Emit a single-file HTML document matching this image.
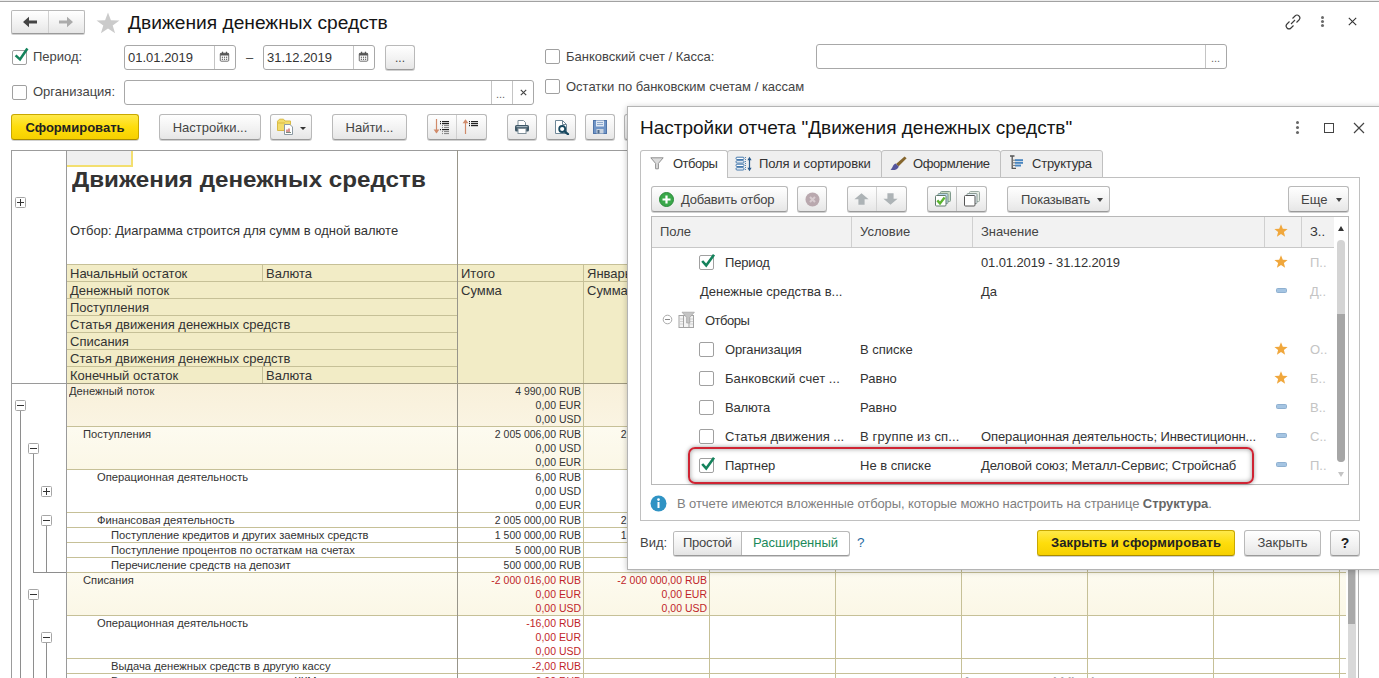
<!DOCTYPE html>
<html lang="ru">
<head>
<meta charset="utf-8">
<title>Движения денежных средств</title>
<style>
*{box-sizing:border-box;margin:0;padding:0}
html,body{width:1379px;height:678px;overflow:hidden;background:#fff}
body{font-family:"Liberation Sans",sans-serif;font-size:13px;color:#444;position:relative}
.abs{position:absolute}
.t{position:absolute;white-space:nowrap;line-height:1}
.btn{position:absolute;border:1px solid #b9b9b9;border-bottom-color:#9a9a9a;border-radius:3px;background:linear-gradient(#ffffff,#f1f1f1 60%,#e6e6e6);box-shadow:0 1px 0 rgba(0,0,0,.18);color:#444;text-align:center;white-space:nowrap}
.btn.y{background:linear-gradient(#ffe94a,#fedd0c 50%,#f6d000);border-color:#c9a800;border-bottom-color:#a98c00;color:#222;font-weight:bold}
.inp{position:absolute;border:1px solid #a8a8a8;border-radius:3px;background:#fff}
.cb{position:absolute;width:15px;height:15px;border:1px solid #a0a0a0;border-radius:2px;background:#fff}
.vl{position:absolute;width:1px;background:#c4c4c4}
.hl{position:absolute;height:1px}
/* report */
#rep{position:absolute;left:0;top:0;width:1379px;height:678px;overflow:hidden}
.rl{position:absolute;background:#c9c89a}
.rt{position:absolute;white-space:nowrap;font-size:13px;color:#333;line-height:17px}
.rd{position:absolute;white-space:nowrap;font-size:10px;color:#333;line-height:14px;margin-top:1px;transform:scaleX(1.12);transform-origin:0 0}
.rd.num{transform:scaleX(1.047);transform-origin:100% 0}
.num{text-align:right}
.red{color:#bf1f29}
.pm{position:absolute;width:11px;height:11px;border:1px solid #a6a6a6;border-radius:1.5px;background:#fff}
.pm:before{content:"";position:absolute;left:1px;top:4px;width:7px;height:1px;background:#333}
.pm.p:after{content:"";position:absolute;left:4px;top:1px;width:1px;height:7px;background:#333}
.gl{position:absolute;background:#8a8a8a}
</style>
</head>
<body>
<!-- top thin line -->
<div class="hl" style="left:0;top:0;width:1379px;background:#ececec"></div><div class="hl" style="left:0;top:1px;width:1379px;background:#a2a2a2"></div>

<!-- nav buttons -->
<div class="btn" style="left:11px;top:10px;width:74px;height:24px;border-radius:2px"></div>
<div class="vl" style="left:48px;top:11px;height:22px;background:#d0d0d0"></div>
<svg class="abs" style="left:22px;top:16px" width="16" height="12" viewBox="0 0 16 12"><path d="M1 6L7 0.8V4.6H15V7.4H7V11.2Z" fill="#444"/></svg>
<svg class="abs" style="left:58px;top:16px" width="16" height="12" viewBox="0 0 16 12"><path d="M15 6L9 0.8V4.6H1V7.4H9V11.2Z" fill="#ababab"/></svg>
<!-- star -->
<svg class="abs" style="left:95.5px;top:11.5px" width="24" height="22" viewBox="0 0 23 22" preserveAspectRatio="none"><path d="M11.5 0.5L14.3 8.2L22.5 8.4L16 13.4L18.3 21.3L11.5 16.6L4.7 21.3L7 13.4L0.5 8.4L8.7 8.2Z" fill="#cbcbcb"/></svg>
<div class="t" style="left:128px;top:13px;font-size:19.2px;color:#151515">Движения денежных средств</div>

<!-- right header icons -->
<svg class="abs" style="left:1284px;top:13px" width="18" height="18" viewBox="0 0 18 18"><g fill="none" stroke="#3a3a3a" stroke-width="1.1"><path d="M7 11L11 7"/><path d="M8.5 5.5L11 3a2.8 2.8 0 0 1 4 4L12.5 9.5"/><path d="M9.5 12.5L7 15a2.8 2.8 0 0 1-4-4L5.5 8.5"/></g></svg>
<div class="abs" style="left:1321px;top:16px;width:3px;height:3px;border-radius:2px;background:#6a6a6a;box-shadow:0 4px 0 #6a6a6a,0 8px 0 #6a6a6a"></div>
<svg class="abs" style="left:1348px;top:17px" width="9" height="9" viewBox="0 0 9 9"><path d="M0.8 0.8L8.2 8.2M8.2 0.8L0.8 8.2" stroke="#333" stroke-width="1.1"/></svg>

<!-- row 2 -->
<div class="cb" style="left:12px;top:50px"></div>
<svg class="abs" style="left:12px;top:45px" width="18" height="18" viewBox="0 0 18 18"><path d="M3.6 10.4L8 14.4L15.4 3.4" stroke="#14835c" stroke-width="2.6" fill="none"/></svg>
<div class="t" style="left:33px;top:50px">Период:</div>
<div class="inp" style="left:124px;top:45px;width:112px;height:25px"></div>
<div class="vl" style="left:214px;top:46px;height:23px"></div>
<div class="t" style="left:128px;top:51px;color:#333">01.01.2019</div>
<div class="t" style="left:246px;top:51px">–</div>
<div class="inp" style="left:263px;top:45px;width:112px;height:25px"></div>
<div class="vl" style="left:353px;top:46px;height:23px"></div>
<div class="t" style="left:267px;top:51px;color:#333">31.12.2019</div>
<div class="btn" style="left:385px;top:45px;width:30px;height:25px;line-height:24px;font-size:12px">...</div>

<div class="cb" style="left:545px;top:49px"></div>
<div class="t" style="left:566px;top:50px">Банковский счет / Касса:</div>
<div class="inp" style="left:816px;top:44px;width:411px;height:25px"></div>
<div class="vl" style="left:1205px;top:45px;height:23px"></div>
<div class="t" style="left:1211px;top:53px;font-size:11px;color:#666">...</div>

<!-- row 3 -->
<div class="cb" style="left:12px;top:85px"></div>
<div class="t" style="left:33px;top:85px">Организация:</div>
<div class="inp" style="left:124px;top:80px;width:410px;height:25px"></div>
<div class="vl" style="left:491px;top:81px;height:23px"></div>
<div class="vl" style="left:512px;top:81px;height:23px"></div>
<div class="t" style="left:496px;top:89px;font-size:11px;color:#666">...</div>
<svg class="abs" style="left:519.5px;top:89px" width="7" height="7" viewBox="0 0 7 7"><path d="M0.8 0.8L6.2 6.2M6.2 0.8L0.8 6.2" stroke="#444" stroke-width="1.15"/></svg>
<div class="cb" style="left:545px;top:79px"></div>
<div class="t" style="left:566px;top:80px">Остатки по банковским счетам / кассам</div>

<!-- row 4 toolbar -->
<div class="btn y" style="left:11px;top:114px;width:128px;height:26px;line-height:25px">Сформировать</div>
<div class="btn" style="left:159px;top:114px;width:102px;height:26px;line-height:25px">Настройки...</div>
<div class="btn" style="left:270px;top:114px;width:42px;height:26px"></div>
<div class="btn" style="left:332px;top:114px;width:75px;height:26px;line-height:25px">Найти...</div>
<div class="btn" style="left:427px;top:114px;width:60px;height:26px"></div>
<div class="vl" style="left:456px;top:115px;height:24px;background:#d0d0d0"></div>
<div class="btn" style="left:507px;top:114px;width:30px;height:26px"></div>
<div class="btn" style="left:546px;top:114px;width:30px;height:26px"></div>
<div class="btn" style="left:585px;top:114px;width:30px;height:26px"></div>
<div class="btn" style="left:624px;top:114px;width:30px;height:26px"></div>
<svg class="abs" style="left:276px;top:118px" width="18" height="18" viewBox="0 0 18 18">
<path d="M1.5 3.2L3.5 1.2H7.5L9 3H14.5V12.5H1.5Z" fill="#f3dc6c" stroke="#d9bb45" stroke-width="1"/>
<path d="M1.5 5H9" stroke="#d9bb45" stroke-width="1"/>
<path d="M8.5 6.5H14L16.5 9V16.5H8.5Z" fill="#fff" stroke="#8c9aa3" stroke-width="1"/>
<path d="M11 14V11.5M13 14V10.5" stroke="#c0504d" stroke-width="1.2"/><path d="M10 14.5H15" stroke="#7a8a7a" stroke-width="1"/>
</svg>
<div class="abs" style="left:300px;top:127px;width:0;height:0;border-left:3px solid transparent;border-right:3px solid transparent;border-top:3.5px solid #333"></div>
<svg class="abs" style="left:430px;top:117px" width="24" height="20" viewBox="0 0 24 20">
<path d="M6.5 2V16" stroke="#d08a6a" stroke-width="1.2"/><path d="M3.6 12.6L6.5 16.6L9.4 12.6Z" fill="#d08a6a"/>
<g fill="#222"><rect x="10" y="4" width="1" height="1.2"/><rect x="12" y="4" width="7" height="1.2"/><rect x="10" y="6" width="1" height="1.2"/><rect x="12" y="6" width="7" height="1.2"/><rect x="10" y="12" width="1" height="1.2"/><rect x="12" y="12" width="7" height="1.2"/></g>
<g fill="#8a8a8a"><rect x="12" y="8" width="1" height="1.1"/><rect x="14" y="8" width="5" height="1.1"/><rect x="12" y="10" width="1" height="1.1"/><rect x="14" y="10" width="5" height="1.1"/><rect x="12" y="14" width="1" height="1.1"/><rect x="14" y="14" width="5" height="1.1"/><rect x="12" y="16" width="1" height="1.1"/><rect x="14" y="16" width="5" height="1.1"/></g>
</svg>
<svg class="abs" style="left:459px;top:117px" width="24" height="20" viewBox="0 0 24 20">
<path d="M6.5 3V17" stroke="#d08a6a" stroke-width="1.2"/><path d="M3.6 6.2L6.5 2.2L9.4 6.2Z" fill="#d08a6a"/>
<g fill="#222"><rect x="10" y="4" width="1" height="1.2"/><rect x="12" y="4" width="7" height="1.2"/><rect x="10" y="6" width="1" height="1.2"/><rect x="12" y="6" width="7" height="1.2"/><rect x="10" y="8" width="1" height="1.2"/><rect x="12" y="8" width="7" height="1.2"/></g>
</svg>
<svg class="abs" style="left:514px;top:119px" width="16" height="16" viewBox="0 0 16 16">
<path d="M4 6V1.5H9.5L11.5 3.5V6" fill="#fff" stroke="#7f8f99" stroke-width="1"/>
<rect x="1" y="6" width="14" height="6.5" rx="1.6" fill="#3e5766"/>
<rect x="2.5" y="7.2" width="11" height="1" fill="#b8c8d2"/>
<rect x="4" y="9.5" width="8" height="5" fill="#fff" stroke="#7f8f99" stroke-width="1"/>
</svg>
<svg class="abs" style="left:554px;top:119px" width="16" height="16" viewBox="0 0 16 16">
<path d="M1.5 1.5H8.5L12.5 5.5V14.5H1.5Z" fill="#fff" stroke="#6f8797" stroke-width="1"/>
<path d="M8.5 1.5V5.5H12.5" fill="none" stroke="#6f8797" stroke-width="1"/>
<circle cx="8.2" cy="10" r="3" fill="#fff" stroke="#17485f" stroke-width="1.8"/>
<path d="M10.5 12.3L14 15.2" stroke="#17485f" stroke-width="2.2" stroke-linecap="round"/>
</svg>
<svg class="abs" style="left:593px;top:120px" width="14" height="14" viewBox="0 0 14 14">
<rect x="0.5" y="0.5" width="13" height="13" fill="#6f94c6" stroke="#4f74a8" stroke-width="1"/>
<rect x="3" y="0.5" width="8" height="6" fill="#dfe8f3"/>
<path d="M4 2.5H10M4 4.5H10" stroke="#8fa9cc" stroke-width="1"/>
<rect x="3.5" y="9" width="7" height="4.5" fill="#c9d3df"/>
<rect x="4.5" y="10" width="2" height="3.5" fill="#4f6a8a"/>
</svg>
<svg class="abs" style="left:219px;top:51px" width="11" height="11.5" viewBox="0 0 13 13" preserveAspectRatio="none">
<rect x="1.5" y="2.5" width="10" height="9" rx="1" fill="#fff" stroke="#555" stroke-width="1"/>
<rect x="1.5" y="2.5" width="10" height="2.6" fill="#555"/>
<rect x="3.5" y="0.8" width="1.4" height="2.6" fill="#555"/><rect x="8.1" y="0.8" width="1.4" height="2.6" fill="#555"/>
<g fill="#555"><rect x="3.3" y="6.4" width="1.4" height="1.3"/><rect x="5.8" y="6.4" width="1.4" height="1.3"/><rect x="8.3" y="6.4" width="1.4" height="1.3"/><rect x="3.3" y="8.7" width="1.4" height="1.3"/><rect x="5.8" y="8.7" width="1.4" height="1.3"/><rect x="8.3" y="8.7" width="1.4" height="1.3"/></g>
</svg>
<svg class="abs" style="left:358px;top:51px" width="11" height="11.5" viewBox="0 0 13 13" preserveAspectRatio="none">
<rect x="1.5" y="2.5" width="10" height="9" rx="1" fill="#fff" stroke="#555" stroke-width="1"/>
<rect x="1.5" y="2.5" width="10" height="2.6" fill="#555"/>
<rect x="3.5" y="0.8" width="1.4" height="2.6" fill="#555"/><rect x="8.1" y="0.8" width="1.4" height="2.6" fill="#555"/>
<g fill="#555"><rect x="3.3" y="6.4" width="1.4" height="1.3"/><rect x="5.8" y="6.4" width="1.4" height="1.3"/><rect x="8.3" y="6.4" width="1.4" height="1.3"/><rect x="3.3" y="8.7" width="1.4" height="1.3"/><rect x="5.8" y="8.7" width="1.4" height="1.3"/><rect x="8.3" y="8.7" width="1.4" height="1.3"/></g>
</svg>

<div id="rep">
<div class="abs" style="left:67px;top:265px;width:1279px;height:118px;background:#f2ecc6"></div>
<div class="abs" style="left:67px;top:384px;width:1279px;height:42px;background:linear-gradient(#f8f0da,#faf4e2)"></div>
<div class="abs" style="left:67px;top:427px;width:1279px;height:42px;background:linear-gradient(#fdfbf0,#fbf7e6)"></div>
<div class="abs" style="left:67px;top:573px;width:1279px;height:42px;background:linear-gradient(#fdfbf0,#fbf7e6)"></div>
<div class="abs" style="left:11px;top:150px;width:1348px;height:1px;background:#9c9c9c"></div>
<div class="abs" style="left:11px;top:150px;width:1px;height:528px;background:#9c9c9c"></div>
<div class="abs" style="left:1358px;top:150px;width:1px;height:528px;background:#b0b0b0"></div>
<div class="abs" style="left:67px;top:151px;width:66px;height:16px;background:#f0f0f0;border-right:2px solid #f3df70;border-bottom:2px solid #f3df70"></div>
<div class="abs" style="left:67px;top:264px;width:1279px;height:1px;background:#c6c097"></div>
<div class="abs" style="left:67px;top:281px;width:1279px;height:1px;background:#c6c097"></div>
<div class="abs" style="left:67px;top:298px;width:390px;height:1px;background:#c6c097"></div>
<div class="abs" style="left:67px;top:315px;width:390px;height:1px;background:#c6c097"></div>
<div class="abs" style="left:67px;top:332px;width:390px;height:1px;background:#c6c097"></div>
<div class="abs" style="left:67px;top:349px;width:390px;height:1px;background:#c6c097"></div>
<div class="abs" style="left:67px;top:366px;width:390px;height:1px;background:#c6c097"></div>
<div class="abs" style="left:67px;top:426px;width:1279px;height:1px;background:#c6c097"></div>
<div class="abs" style="left:67px;top:469px;width:1279px;height:1px;background:#c6c097"></div>
<div class="abs" style="left:67px;top:512px;width:1279px;height:1px;background:#c6c097"></div>
<div class="abs" style="left:67px;top:527px;width:1279px;height:1px;background:#c6c097"></div>
<div class="abs" style="left:67px;top:542px;width:1279px;height:1px;background:#c6c097"></div>
<div class="abs" style="left:67px;top:557px;width:1279px;height:1px;background:#c6c097"></div>
<div class="abs" style="left:67px;top:572px;width:1279px;height:1px;background:#c6c097"></div>
<div class="abs" style="left:67px;top:615px;width:1279px;height:1px;background:#c6c097"></div>
<div class="abs" style="left:67px;top:658px;width:1279px;height:1px;background:#c6c097"></div>
<div class="abs" style="left:67px;top:673px;width:1279px;height:1px;background:#c6c097"></div>
<div class="abs" style="left:262px;top:264px;width:1px;height:18px;background:#c6c097"></div>
<div class="abs" style="left:262px;top:366px;width:1px;height:18px;background:#c6c097"></div>
<div class="abs" style="left:583px;top:264px;width:1px;height:414px;background:#c6c097"></div>
<div class="abs" style="left:709px;top:264px;width:1px;height:414px;background:#c6c097"></div>
<div class="abs" style="left:835px;top:264px;width:1px;height:414px;background:#c6c097"></div>
<div class="abs" style="left:961px;top:264px;width:1px;height:414px;background:#c6c097"></div>
<div class="abs" style="left:1087px;top:264px;width:1px;height:414px;background:#c6c097"></div>
<div class="abs" style="left:1213px;top:264px;width:1px;height:414px;background:#c6c097"></div>
<div class="abs" style="left:1339px;top:264px;width:1px;height:414px;background:#c6c097"></div>
<div class="abs" style="left:66px;top:150px;width:1px;height:528px;background:#9a9a9a"></div>
<div class="abs" style="left:457px;top:150px;width:1px;height:528px;background:#98958a"></div>
<div class="abs" style="left:11px;top:383px;width:56px;height:1px;background:#9a9a9a"></div>
<div class="abs" style="left:67px;top:383px;width:1279px;height:1px;background:#a09a80"></div>
<div class="abs" style="left:1348px;top:568px;width:8px;height:110px;background:#d9d9d9"></div>
<div class="abs" style="left:1348px;top:568px;width:7px;height:56px;background:#a9a9a9"></div>
<div class="t" style="left:72px;top:169px;font-size:22px;font-weight:bold;color:#333;transform:scaleX(1.1);transform-origin:0 0">Движения денежных средств</div>
<div class="t" style="left:70px;top:224px;font-size:13px;color:#333">Отбор: Диаграмма строится для сумм в одной валюте</div>
<div class="rt" style="left:70px;top:265px">Начальный остаток</div>
<div class="rt" style="left:70px;top:282px">Денежный поток</div>
<div class="rt" style="left:70px;top:299px">Поступления</div>
<div class="rt" style="left:70px;top:316px">Статья движения денежных средств</div>
<div class="rt" style="left:70px;top:333px">Списания</div>
<div class="rt" style="left:70px;top:350px">Статья движения денежных средств</div>
<div class="rt" style="left:70px;top:367px">Конечный остаток</div>
<div class="rt" style="left:266px;top:265px">Валюта</div>
<div class="rt" style="left:266px;top:367px">Валюта</div>
<div class="rt" style="left:461px;top:265px">Итого</div>
<div class="rt" style="left:461px;top:282px">Сумма</div>
<div class="rt" style="left:587px;top:265px">Январь 2019</div>
<div class="rt" style="left:587px;top:282px">Сумма</div>
<div class="rd" style="left:69px;top:384px">Денежный поток</div>
<div class="rd num" style="left:457px;width:124px;top:384px">4 990,00 RUB<br>0,00 EUR<br>0,00 USD</div>
<div class="rd" style="left:83px;top:427px">Поступления</div>
<div class="rd num" style="left:457px;width:124px;top:427px">2 005 006,00 RUB<br>0,00 USD<br>0,00 EUR</div>
<div class="rd num" style="left:583px;width:124px;top:427px">2 005 000,00 RUB<br>0,00 USD<br>0,00 EUR</div>
<div class="rd" style="left:97px;top:470px">Операционная деятельность</div>
<div class="rd num" style="left:457px;width:124px;top:470px">6,00 RUB<br>0,00 USD<br>0,00 EUR</div>
<div class="rd" style="left:97px;top:513px">Финансовая деятельность</div>
<div class="rd num" style="left:457px;width:124px;top:513px">2 005 000,00 RUB</div>
<div class="rd num" style="left:583px;width:124px;top:513px">2 005 000,00 RUB</div>
<div class="rd" style="left:111px;top:528px">Поступление кредитов и других заемных средств</div>
<div class="rd num" style="left:457px;width:124px;top:528px">1 500 000,00 RUB</div>
<div class="rd num" style="left:583px;width:124px;top:528px">1 500 000,00 RUB</div>
<div class="rd" style="left:111px;top:543px">Поступление процентов по остаткам на счетах</div>
<div class="rd num" style="left:457px;width:124px;top:543px">5 000,00 RUB</div>
<div class="rd" style="left:111px;top:558px">Перечисление средств на депозит</div>
<div class="rd num" style="left:457px;width:124px;top:558px">500 000,00 RUB</div>
<div class="rd num" style="left:583px;width:124px;top:558px">500 000,00 RUB</div>
<div class="rd" style="left:83px;top:573px">Списания</div>
<div class="rd num red" style="left:457px;width:124px;top:573px">-2 000 016,00 RUB<br>0,00 EUR<br>0,00 USD</div>
<div class="rd num red" style="left:583px;width:124px;top:573px">-2 000 000,00 RUB<br>0,00 EUR<br>0,00 USD</div>
<div class="rd" style="left:97px;top:616px">Операционная деятельность</div>
<div class="rd num red" style="left:457px;width:124px;top:616px">-16,00 RUB<br>0,00 EUR<br>0,00 USD</div>
<div class="rd" style="left:111px;top:659px">Выдача денежных средств в другую кассу</div>
<div class="rd num red" style="left:457px;width:124px;top:659px">-2,00 RUB</div>
<div class="rd" style="left:111px;top:674px">Выдача денежных средств в кассу ККМ</div>
<div class="rd num red" style="left:457px;width:124px;top:674px">-6,00 RUB</div>
<div class="t" style="left:961px;top:675px;font-size:18px;color:#aaa">Активация Windows</div>
<div class="abs" style="left:20px;top:411px;width:1px;height:267px;background:#8e8e8e"></div>
<div class="abs" style="left:33px;top:454px;width:1px;height:119px;background:#8e8e8e"></div>
<div class="abs" style="left:33px;top:572px;width:33px;height:1px;background:#8e8e8e"></div>
<div class="abs" style="left:46px;top:526px;width:1px;height:47px;background:#8e8e8e"></div>
<div class="abs" style="left:33px;top:600px;width:1px;height:78px;background:#8e8e8e"></div>
<div class="abs" style="left:46px;top:643px;width:1px;height:35px;background:#8e8e8e"></div>
<div class="pm p" style="left:15px;top:197px"></div>
<div class="pm" style="left:15px;top:400px"></div>
<div class="pm" style="left:28px;top:443px"></div>
<div class="pm p" style="left:41px;top:486px"></div>
<div class="pm" style="left:41px;top:515px"></div>
<div class="pm" style="left:28px;top:589px"></div>
<div class="pm" style="left:41px;top:632px"></div>
</div>

<div class="abs" style="left:627px;top:106px;width:760px;height:464px;background:#fff;border:1px solid #b4b4b4;box-shadow:0 1px 6px rgba(0,0,0,.24)"></div>
<div class="t" style="left:640px;top:118px;font-size:19px;color:#151515">Настройки отчета "Движения денежных средств"</div>
<div class="abs" style="left:1296px;top:121px;width:3px;height:3px;border-radius:2px;background:#666;box-shadow:0 5px 0 #666,0 10px 0 #666"></div>
<div class="abs" style="left:1324px;top:123px;width:10px;height:10px;border:1.5px solid #444"></div>
<svg class="abs" style="left:1353px;top:122px" width="12" height="12" viewBox="0 0 12 12"><path d="M1 1L11 11M11 1L1 11" stroke="#444" stroke-width="1.2"/></svg>
<div class="abs" style="left:640px;top:177px;width:720px;height:344px;border:1px solid #c0c0c0;background:#fff"></div>
<div class="abs" style="left:727px;top:150px;width:155px;height:28px;border:1px solid #c0c0c0;border-radius:3px 3px 0 0;background:#efefef"></div>
<div class="abs" style="left:881px;top:150px;width:120px;height:28px;border:1px solid #c0c0c0;border-radius:3px 3px 0 0;background:#efefef"></div>
<div class="abs" style="left:1000px;top:150px;width:103px;height:28px;border:1px solid #c0c0c0;border-radius:3px 3px 0 0;background:#efefef"></div>
<div class="abs" style="left:640px;top:150px;width:88px;height:28px;border:1px solid #c0c0c0;border-bottom:none;border-radius:3px 3px 0 0;background:#fff"></div>
<div class="t" style="left:673px;top:157px;color:#333;letter-spacing:-.5px">Отборы</div>
<div class="t" style="left:759px;top:157px;color:#333;letter-spacing:-.12px">Поля и сортировки</div>
<div class="t" style="left:913px;top:157px;color:#333;letter-spacing:-.4px">Оформление</div>
<div class="t" style="left:1032px;top:157px;color:#333;letter-spacing:-.2px">Структура</div>
<svg class="abs" style="left:650px;top:157px" width="14" height="13" viewBox="0 0 14 13"><path d="M0.8 0.8H13.2L8.4 6.4V11.8H5.6V6.4Z" fill="#dcdcdc" stroke="#909090" stroke-width="1" stroke-linejoin="round"/></svg>
<svg class="abs" style="left:735px;top:156px" width="18" height="16" viewBox="0 0 18 16"><g stroke="#4478ac" stroke-width="1" fill="#fff"><rect x="1" y="1.2" width="8" height="2.3" rx="1"/><rect x="1" y="4.7" width="8" height="2.3" rx="1"/><rect x="1" y="8.2" width="8" height="2.3" rx="1"/><rect x="1" y="11.7" width="8" height="2.3" rx="1"/></g><path d="M10.5 1V14.5" stroke="#5585b3" stroke-width="1" stroke-dasharray="1 1"/><path d="M14.5 2.5V13.5" stroke="#2a5a8a" stroke-width="1.2"/><path d="M12.4 4.2L14.5 0.8L16.6 4.2Z M12.4 11.8L14.5 15.2L16.6 11.8Z" fill="#2a5a8a"/></svg>
<svg class="abs" style="left:890px;top:156px" width="17" height="15" viewBox="0 0 17 15"><path d="M14.6 0.4L16.6 2.2L8.6 10.2L6 8Z" fill="#86662e"/><path d="M5.6 7.6L8.8 10.4C8 13.4 4 14.8 0.4 13.8C2.8 12.6 2.6 8.6 5.6 7.6Z" fill="#55559c"/></svg>
<svg class="abs" style="left:1009px;top:155px" width="16" height="15" viewBox="0 0 16 15"><path d="M1 1H5.5M3.2 1V13.4H7" stroke="#555" stroke-width="1.3" fill="none"/><path d="M3.2 5.2H6M3.2 7.8H6M3.2 10.4H6" stroke="#777" stroke-width="1"/><g fill="#4a86c0"><rect x="6" y="4.2" width="8" height="1.9"/><rect x="6" y="6.9" width="8" height="1.9"/><rect x="6" y="9.6" width="6" height="1.9"/></g></svg>
<div class="btn" style="left:651px;top:186px;width:137px;height:26px"></div>
<svg class="abs" style="left:659px;top:192px" width="15" height="15" viewBox="0 0 15 15"><circle cx="7.5" cy="7.5" r="7" fill="#3aa84a" stroke="#2a8a3a" stroke-width="1"/><path d="M7.5 3.5V11.5M3.5 7.5H11.5" stroke="#fff" stroke-width="2.2"/></svg>
<div class="t" style="left:681px;top:193px;color:#444;letter-spacing:-.18px">Добавить отбор</div>
<div class="btn" style="left:797px;top:186px;width:30px;height:26px"></div>
<svg class="abs" style="left:805px;top:192px" width="15" height="15" viewBox="0 0 15 15"><circle cx="7.5" cy="7.5" r="7" fill="#b9a8ae"/><path d="M5 5L10 10M10 5L5 10" stroke="#d8ccd0" stroke-width="2"/></svg>
<div class="btn" style="left:847px;top:186px;width:60px;height:26px"></div>
<div class="vl" style="left:876px;top:187px;height:24px;background:#d4d4d4"></div>
<svg class="abs" style="left:854px;top:193px" width="15" height="12" viewBox="0 0 15 12"><path d="M7.5 0.3L14.6 6.3H10.6V11.7H4.4V6.3H0.4Z" fill="#adb3b6"/></svg>
<svg class="abs" style="left:883px;top:193px" width="15" height="12" viewBox="0 0 15 12"><path d="M7.5 11.7L14.6 5.7H10.6V0.3H4.4V5.7H0.4Z" fill="#adb3b6"/></svg>
<div class="btn" style="left:927px;top:186px;width:60px;height:26px"></div>
<div class="vl" style="left:956px;top:187px;height:24px;background:#c4c4c4"></div>
<svg class="abs" style="left:935px;top:191px" width="17" height="16" viewBox="0 0 17 16"><rect x="5.5" y="0.5" width="10" height="10" rx="1" fill="#c9dcc4" stroke="#7f9a8c"/><rect x="3" y="2.5" width="10" height="10" rx="1" fill="#bcd6ea" stroke="#7f9a8c"/><rect x="0.5" y="4.5" width="10.5" height="10.5" rx="1" fill="#fff" stroke="#5f7a6c"/><path d="M2.3 9.4L5 12.4L9.6 6.6" stroke="#5cb531" stroke-width="2.4" fill="none"/></svg>
<svg class="abs" style="left:964px;top:191px" width="17" height="16" viewBox="0 0 17 16"><rect x="5.5" y="0.5" width="10" height="10" rx="1" fill="#e4ece4" stroke="#9aaaa2"/><rect x="3" y="2.5" width="10" height="10" rx="1" fill="#e6eef4" stroke="#8a9a94"/><rect x="0.5" y="4.5" width="10.5" height="10.5" rx="1" fill="#fff" stroke="#555"/></svg>
<div class="btn" style="left:1007px;top:186px;width:103px;height:26px"></div>
<div class="t" style="left:1021px;top:193px;color:#444;letter-spacing:-.22px">Показывать</div>
<div class="abs" style="left:1097px;top:198px;width:0;height:0;border-left:3px solid transparent;border-right:3px solid transparent;border-top:4px solid #444"></div>
<div class="btn" style="left:1288px;top:186px;width:61px;height:26px"></div>
<div class="t" style="left:1301px;top:193px;color:#444">Еще</div>
<div class="abs" style="left:1336px;top:198px;width:0;height:0;border-left:3px solid transparent;border-right:3px solid transparent;border-top:4px solid #444"></div>
<div class="abs" style="left:651px;top:216px;width:698px;height:269px;border:1px solid #b8b8b8;background:#fff"></div>
<div class="abs" style="left:652px;top:217px;width:682px;height:31px;background:#f2f2f2;border-bottom:1px solid #c8c8c8"></div>
<div class="vl" style="left:851px;top:217px;height:30px;background:#d0d0d0"></div>
<div class="vl" style="left:972px;top:217px;height:30px;background:#d0d0d0"></div>
<div class="vl" style="left:1264px;top:217px;height:30px;background:#d0d0d0"></div>
<div class="vl" style="left:1301px;top:217px;height:30px;background:#d0d0d0"></div>
<div class="t" style="left:660px;top:225px;color:#444">Поле</div>
<div class="t" style="left:860px;top:225px;color:#444">Условие</div>
<div class="t" style="left:981px;top:225px;color:#444">Значение</div>
<div class="t" style="left:1310px;top:225px;color:#333">З..</div>
<svg class="abs" style="left:1274px;top:224px" width="14" height="13" viewBox="0 0 14 13"><path d="M7 0.3L8.8 4.7L13.6 5L9.9 8L11.1 12.7L7 10.1L2.9 12.7L4.1 8L0.4 5L5.2 4.7Z" fill="#f0a73c"/></svg>
<div class="abs" style="left:1338px;top:226px;width:0;height:0;border-left:3.5px solid transparent;border-right:3.5px solid transparent;border-bottom:5px solid #333"></div>
<div class="abs" style="left:1337px;top:240px;width:8px;height:222px;border-radius:4px;background:#d4d4d4"></div>
<div class="abs" style="left:1337px;top:314px;width:8px;height:148px;border-radius:0 0 4px 4px;background:#a6a6a6"></div>
<div class="abs" style="left:1338px;top:472px;width:0;height:0;border-left:3.5px solid transparent;border-right:3.5px solid transparent;border-top:5px solid #c4c4c4"></div>
<div class="cb" style="left:699px;top:255px"></div>
<svg class="abs" style="left:700px;top:253px" width="16" height="16" viewBox="0 0 16 16"><path d="M2.2 8L6.2 12.4L14 1.8" stroke="#14835c" stroke-width="2.6" fill="none"/></svg>
<div class="t" style="left:725px;top:256px;color:#333;letter-spacing:-0.15px">Период</div>
<div class="t" style="left:981px;top:256px;color:#333;letter-spacing:-.12px">01.01.2019 - 31.12.2019</div>
<svg class="abs" style="left:1274px;top:255px" width="14" height="13" viewBox="0 0 14 13"><path d="M7 0.3L8.8 4.7L13.6 5L9.9 8L11.1 12.7L7 10.1L2.9 12.7L4.1 8L0.4 5L5.2 4.7Z" fill="#f0a73c"/></svg>
<div class="t" style="left:1310px;top:256px;color:#c4c4c4">П..</div>
<div class="t" style="left:700px;top:285px;color:#333;letter-spacing:0px">Денежные средства в...</div>
<div class="t" style="left:981px;top:285px;color:#333;letter-spacing:-.12px">Да</div>
<div class="abs" style="left:1276px;top:288px;width:11px;height:5px;border-radius:1.5px;background:#a4c4e2;border:1px solid #8fb0d0"></div>
<div class="t" style="left:1310px;top:285px;color:#c4c4c4">Д..</div>
<div class="t" style="left:705px;top:314px;color:#333;letter-spacing:-0.5px">Отборы</div>
<div class="cb" style="left:699px;top:342px"></div>
<div class="t" style="left:725px;top:343px;color:#333;letter-spacing:-0.15px">Организация</div>
<div class="t" style="left:860px;top:343px;color:#333;letter-spacing:0px">В списке</div>
<svg class="abs" style="left:1274px;top:342px" width="14" height="13" viewBox="0 0 14 13"><path d="M7 0.3L8.8 4.7L13.6 5L9.9 8L11.1 12.7L7 10.1L2.9 12.7L4.1 8L0.4 5L5.2 4.7Z" fill="#f0a73c"/></svg>
<div class="t" style="left:1310px;top:343px;color:#c4c4c4">О..</div>
<div class="cb" style="left:699px;top:371px"></div>
<div class="t" style="left:725px;top:372px;color:#333;letter-spacing:0.08px">Банковский счет ...</div>
<div class="t" style="left:860px;top:372px;color:#333;letter-spacing:0px">Равно</div>
<svg class="abs" style="left:1274px;top:371px" width="14" height="13" viewBox="0 0 14 13"><path d="M7 0.3L8.8 4.7L13.6 5L9.9 8L11.1 12.7L7 10.1L2.9 12.7L4.1 8L0.4 5L5.2 4.7Z" fill="#f0a73c"/></svg>
<div class="t" style="left:1310px;top:372px;color:#c4c4c4">Б..</div>
<div class="cb" style="left:699px;top:400px"></div>
<div class="t" style="left:725px;top:401px;color:#333;letter-spacing:-0.15px">Валюта</div>
<div class="t" style="left:860px;top:401px;color:#333;letter-spacing:0px">Равно</div>
<div class="abs" style="left:1276px;top:404px;width:11px;height:5px;border-radius:1.5px;background:#a4c4e2;border:1px solid #8fb0d0"></div>
<div class="t" style="left:1310px;top:401px;color:#c4c4c4">В..</div>
<div class="cb" style="left:699px;top:429px"></div>
<div class="t" style="left:725px;top:430px;color:#333;letter-spacing:0px">Статья движения ...</div>
<div class="t" style="left:860px;top:430px;color:#333;letter-spacing:0.17px">В группе из сп...</div>
<div class="t" style="left:981px;top:430px;color:#333;letter-spacing:-.12px">Операционная деятельность; Инвестиционн...</div>
<div class="abs" style="left:1276px;top:433px;width:11px;height:5px;border-radius:1.5px;background:#a4c4e2;border:1px solid #8fb0d0"></div>
<div class="t" style="left:1310px;top:430px;color:#c4c4c4">С..</div>
<div class="cb" style="left:699px;top:458px"></div>
<svg class="abs" style="left:700px;top:456px" width="16" height="16" viewBox="0 0 16 16"><path d="M2.2 8L6.2 12.4L14 1.8" stroke="#14835c" stroke-width="2.6" fill="none"/></svg>
<div class="t" style="left:725px;top:459px;color:#333;letter-spacing:-0.15px">Партнер</div>
<div class="t" style="left:860px;top:459px;color:#333;letter-spacing:0px">Не в списке</div>
<div class="t" style="left:981px;top:459px;color:#333;letter-spacing:-.12px">Деловой союз; Металл-Сервис; Стройснаб</div>
<div class="abs" style="left:1276px;top:462px;width:11px;height:5px;border-radius:1.5px;background:#a4c4e2;border:1px solid #8fb0d0"></div>
<div class="t" style="left:1310px;top:459px;color:#c4c4c4">П..</div>
<svg class="abs" style="left:662px;top:314px" width="11" height="11" viewBox="0 0 11 11"><circle cx="5.5" cy="5.5" r="4.3" fill="#fff" stroke="#aaa" stroke-width="1"/><path d="M3 5.5H8" stroke="#888" stroke-width="1"/></svg>
<svg class="abs" style="left:678px;top:311px" width="18" height="18" viewBox="0 0 18 18"><rect x="1" y="4.5" width="14.5" height="12" fill="#f4f4f4" stroke="#a4a4a4"/><path d="M5.5 4.5V16.5M11 4.5V16.5" stroke="#a4a4a4"/><path d="M2 8H5M2 10.5H5M2 13H5M12 8H15M12 10.5H15M12 13H15" stroke="#d0d0d0" stroke-width="1"/><path d="M4 1.2H16.4L11.8 6.4V12H8.6V6.4Z" fill="#c4c4c4" stroke="#a0a0a0" stroke-width="0.7"/></svg>
<div class="abs" style="left:688px;top:447px;width:566px;height:37px;border:2px solid #cf2433;border-radius:7px;box-shadow:0 0 4px rgba(0,0,0,.4), inset 0 0 5px rgba(0,0,0,.38)"></div>
<svg class="abs" style="left:650px;top:495px" width="17" height="17" viewBox="0 0 17 17"><circle cx="8.5" cy="8.5" r="8" fill="#2f93c4"/><rect x="7.5" y="7" width="2" height="6" fill="#fff"/><circle cx="8.5" cy="4.6" r="1.3" fill="#fff"/></svg>
<div class="t" style="left:677px;top:497px;color:#808080;letter-spacing:-.1px">В отчете имеются вложенные отборы, которые можно настроить на странице <b style="color:#666">Структура</b>.</div>
<div class="t" style="left:640px;top:536px;color:#444">Вид:</div>
<div class="btn" style="left:673px;top:531px;width:177px;height:25px;background:#fff"></div>
<div class="abs" style="left:674px;top:532px;width:68px;height:23px;border-radius:2px 0 0 2px;background:linear-gradient(#fff,#f1f1f1 60%,#e4e4e4);border-right:1px solid #b9b9b9"></div>
<div class="t" style="left:683px;top:536px;color:#444;letter-spacing:-.25px">Простой</div>
<div class="t" style="left:753px;top:536px;color:#1b8a5a">Расширенный</div>
<div class="t" style="left:857px;top:536px;color:#1f6a9f;font-size:13.5px">?</div>
<div class="btn y" style="left:1037px;top:530px;width:198px;height:26px;line-height:24px;letter-spacing:.12px">Закрыть и сформировать</div>
<div class="btn" style="left:1244px;top:530px;width:77px;height:26px;line-height:24px">Закрыть</div>
<div class="btn" style="left:1330px;top:530px;width:30px;height:26px;line-height:24px;font-weight:bold;font-size:14px;color:#222">?</div>
</body>
</html>
